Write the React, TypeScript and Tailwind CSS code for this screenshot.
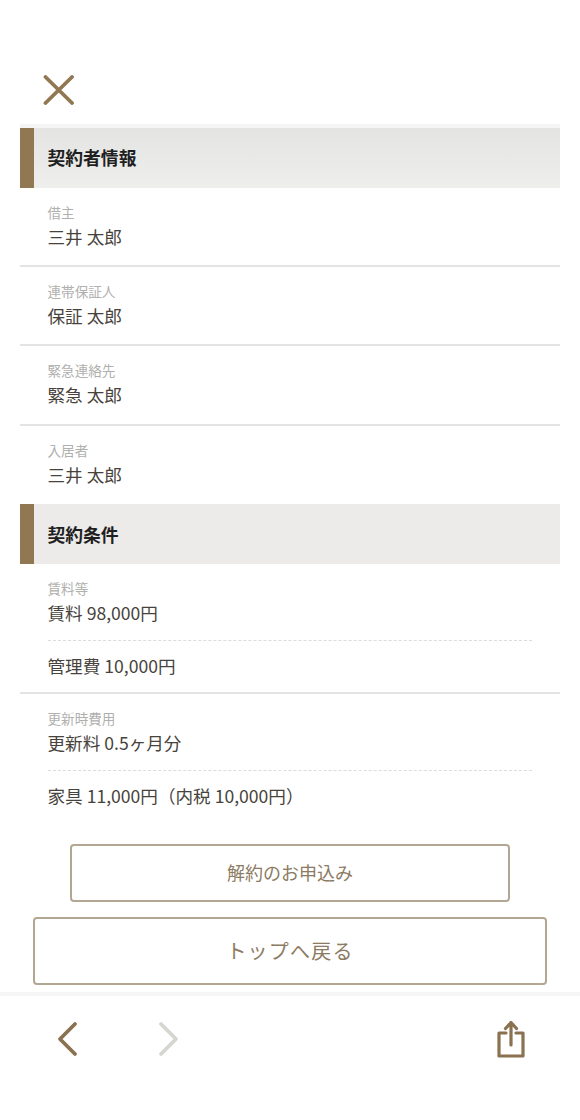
const rowValue = 'text-[17.6px] leading-[26px] text-[#47433c]';
const rowLabel = 'text-[13.6px] leading-[20px] text-[#b0b0ae]';

function SectionHead({ title, first }: { title: string; first?: boolean }) {
    return (
        <div className={`flex items-center mx-5 h-[60px] border-l-[14px] border-[#917752] pl-[13.5px] ${first ? 'pb-[2px] bg-gradient-to-b from-[#e4e4e3] to-[#eeeeed]' : 'bg-[#ecebea]'}`}>
            <h2 className="text-[17.8px] font-bold text-[#1f1f1f]">{title}</h2>
        </div>
    );
}

function InfoRow({ label, value, height }: { label: string; value: string; height: 'h-[79px]' | 'h-[80px]' | 'h-[78px]' }) {
    const hasBorder = height !== 'h-[78px]';
    return (
        <div className={`mx-5 pl-[27.5px] pr-7 pt-[14px] ${height} ${hasBorder ? 'border-b-2 border-[#e3e3e3]' : ''}`}>
            <p className={rowLabel}>{label}</p>
            <p className={`${rowValue} mt-[2px]`}>{value}</p>
        </div>
    );
}

function DoubleRow({ label, first, second, border }: { label: string; first: string; second: string; border?: boolean }) {
    return (
        <div className={`mx-5 pl-[27.5px] pr-7 pt-[14px] ${border ? 'h-[130px] border-b-2 border-[#e3e3e3]' : 'h-[130px]'}`}>
            <p className={rowLabel}>{label}</p>
            <p className={`${rowValue} mt-[2px]`}>{first}</p>
            <div className="mt-[14px] border-t border-dashed border-[#dcdcdc]" />
            <p className={`${rowValue} mt-[12px]`}>{second}</p>
        </div>
    );
}

export default function App() {
    return (
        <div className="w-[580px] h-[1120px] bg-white flex flex-col overflow-hidden font-['Noto_Sans_CJK_JP','Noto_Sans',sans-serif]">
            <header className="h-[124px] pt-[75px] pl-[43px] shrink-0">
                <svg width="31" height="30" viewBox="0 0 31 30" fill="none" stroke="#917752" strokeWidth="3.8" strokeLinecap="round">
                    <path d="M2.5 2L29 28M29 2L2.5 28" />
                </svg>
            </header>

            <div className="mx-5 h-1 bg-[#f5f5f5]" />
            <SectionHead title="契約者情報" first />
            <InfoRow label="借主" value="三井 太郎" height="h-[79px]" />
            <InfoRow label="連帯保証人" value="保証 太郎" height="h-[79px]" />
            <InfoRow label="緊急連絡先" value="緊急 太郎" height="h-[80px]" />
            <InfoRow label="入居者" value="三井 太郎" height="h-[78px]" />

            <SectionHead title="契約条件" />
            <DoubleRow label="賃料等" first="賃料 98,000円" second="管理費 10,000円" border />
            <DoubleRow label="更新時費用" first="更新料 0.5ヶ月分" second="家具 11,000円（内税 10,000円）" />

            <div className="flex flex-col items-center mt-[20px]">
                <button className="w-[440px] h-[58px] border-2 border-[#b3a793] rounded text-[18px] text-[#8c7b62] pb-[1px]">解約のお申込み</button>
                <button className="w-[514px] h-[68px] mt-[15px] border-2 border-[#b3a793] rounded text-[20px] tracking-[1.2px] text-[#8c7b62]">トップへ戻る</button>
            </div>

            <footer className="mt-[7px] flex-1 border-t-4 border-[#f6f6f6] relative">
                <div className="flex items-center justify-between pl-[54px] pr-[54px] pt-[24px]">
                    <div className="flex items-center gap-[77px]">
                        <svg width="24" height="36" viewBox="0 0 24 36" fill="none" stroke="#8a7150" strokeWidth="3.8" strokeLinecap="round" strokeLinejoin="round">
                            <path d="M21 3L6 18L21 33" />
                        </svg>
                        <svg width="24" height="36" viewBox="0 0 24 36" fill="none" stroke="#d6d5cf" strokeWidth="3.8" strokeLinecap="round" strokeLinejoin="round">
                            <path d="M6 3L21 18L6 33" />
                        </svg>
                    </div>
                    <svg width="30" height="38" viewBox="0 0 30 38" fill="none" stroke="#8a7150" strokeWidth="3.2" strokeLinecap="round" strokeLinejoin="round">
                        <path d="M10 13H3V36H27V13H20" />
                        <path d="M15 25V3M9.5 8.5L15 2.5L20.5 8.5" />
                    </svg>
                </div>
            </footer>
        </div>
    );
}
